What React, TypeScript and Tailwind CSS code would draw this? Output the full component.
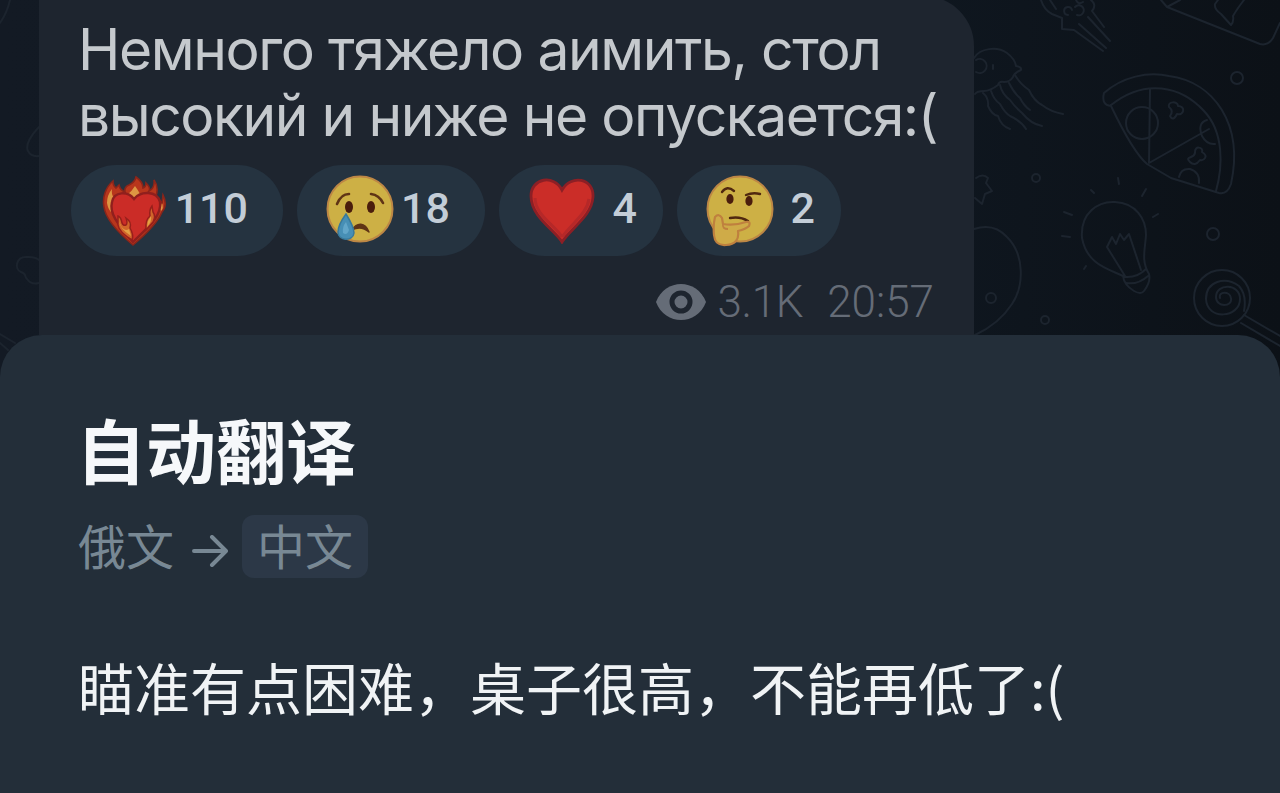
import React from 'react';

const Wallpaper: React.FC = () => (
  <svg className="absolute inset-0" width="1280" height="400" viewBox="0 0 1280 400" fill="none" stroke="#1c242e" strokeWidth="2" strokeLinecap="round" strokeLinejoin="round">
    {/* left edge */}
    <path d="M10 0Q7 13 0 23M39 127C31 135 25 145 28 151Q31 157 39 156" />
    <path d="M39 260C34 256 29 257 26 257C16 257 14 269 21 272C27 274 24 276 27 279Q31 285 39 283" />
    <path d="M0 334L15 343M0 343L8 350" />
    {/* squid */}
    <path d="M1041 0Q1044 10 1052 14L1062 18L1062 29L1074 30L1103 51M1079 24L1106 48M1088 17L1110 41M1091 0Q1097 5 1092 11L1104 27M1050 0L1056 9" />
    <path d="M1068 15A4 4 0 1 1 1072 10M1077 15A5 5 0 1 0 1075 7M1083 2Q1078 5 1076 0" />
    {/* pizza box */}
    <path d="M1161 0L1167 7L1260 44Q1268 46 1273 38L1280 23M1167 7L1180 0M1244 0Q1237 9 1233 16Q1234 22 1231 25L1221 14Q1214 9 1215 4L1218 0" />
    {/* jellyfish */}
    <path d="M974 58C980 48 997 46 1007 53Q1015 59 1016 66Q1022 67 1021 70Q1014 73 1013 77Q1010 82 1004 82Q999 81 998 85Q990 91 984 91Q977 91 975 94" />
    <path d="M976 60A7 7 0 1 1 976 72M993 65V69" />
    <path d="M983 93Q989 98 988 106Q992 115 998 116Q1001 126 1010 129M991 91Q994 100 1000 104Q1005 113 1010 116Q1021 121 1026 129M1000 85Q1002 94 1010 100Q1015 107 1022 113Q1031 124 1042 126M1009 83Q1014 93 1020 98Q1024 106 1030 110M1015 75Q1020 84 1029 90Q1034 101 1042 105Q1051 112 1063 114" />
    {/* pizza */}
    <path d="M1104 93C1122 77 1148 71 1169 76C1214 82 1244 124 1231 184Q1227 195 1219 193L1171 178L1147 164Q1133 152 1111 106Q1101 105 1104 93ZM1111 105C1145 78 1181 86 1204 111C1224 132 1223 166 1216 191" />
    <path d="M1150 89L1149 163L1209 129M1207 120Q1197 123 1202 136Q1207 145 1215 144M1179 177Q1181 168 1190 169Q1200 172 1199 183" />
    <circle cx="1142" cy="123" r="16" />
    <path d="M1169 107C1167 101 1178 101 1178 106C1186 106 1184 116 1177 114Q1173 122 1170 116Q1174 111 1169 107ZM1195 153C1194 145 1204 147 1202 152C1209 156 1204 161 1200 160Q1195 167 1190 162C1184 156 1194 159 1195 153Z" />
    {/* bulb */}
    <path d="M1123 276C1109 269 1087 265 1082 238C1080 213 1098 201 1115 202C1136 203 1146 219 1146 235C1145 250 1141 261 1149 274Q1151 282 1144 291Q1141 295 1134 291Q1124 285 1123 276ZM1125 276L1107 247L1112 237L1116 244L1120 234L1124 240L1129 234L1141 270M1125 277Q1137 278 1146 269M1126 283Q1138 285 1148 276" />
    <path d="M1118 178L1119 184M1146 189L1142 196M1091 190L1094 193M1064 212L1072 215M1062 236L1070 237M1153 217L1158 214M1084 269L1086 266" />
    {/* planet */}
    <path d="M974 229C989 224 999 228 1007 237C1025 255 1024 286 1012 304Q999 324 975 335" />
    <path d="M976 178Q983 173 988 178L986 183L992 191L985 194L982 204L975 198" />
    {/* lollipop */}
    <circle cx="1222" cy="298" r="28" />
    <path d="M1220 298C1218 291 1230 291 1231 298C1233 307 1216 308 1216 297C1216 283 1240 283 1240 299C1240 318 1207 321 1206 299C1206 281 1225 276 1239 286Q1247 295 1244 311M1244 315L1280 336M1241 323L1280 346" />
    {/* dots */}
    <circle cx="1237" cy="78" r="6" />
    <circle cx="1213" cy="234" r="6" />
    <circle cx="991" cy="298" r="5" />
    <circle cx="1045" cy="320" r="4" />
    <circle cx="1036" cy="178" r="4" />
  </svg>
);

const BurningHeart = () => (
  <svg width="66" height="74" viewBox="0 0 66 74">
    <path d="M32 71C20 61 5 47 3 33C1 23 5 13 12 7Q12 12 15 14L18 11Q19 16 24 18Q23 13 28 11Q34 8 35 3Q42 8 42 14Q45 13 45 9Q50 14 48 17Q54 14 53 6Q58 13 55 22Q60 27 61 30L62 21Q67 31 61 38C56 50 44 61 32 71Z" fill="#b8361c" stroke="#8a251a" strokeWidth="1.6" />
    <path d="M11 15Q6 21 6 29Q7 35 10 38Q10 29 13 24Q10 20 11 15ZM26 21Q31 17 34 12Q37 16 39 20L33 24ZM61 29Q63 34 60 37L59 35Z" fill="#dd9642" />
    <path d="M33 25C27 17 13 17 11 28C8 40 17 50 32 68C47 53 61 42 59 28C56 16 39 17 33 25Z" fill="#cb2c27" stroke="#901f1d" strokeWidth="2.4" />
    <path d="M17 42Q20 43 21 49Q22 52 25 51Q27 49 25 44Q31 48 29 54Q33 61 31 66Q18 58 17 51Z" fill="#d1652a" stroke="#981f1b" strokeWidth="1.5" />
    <path d="M51 32Q48 36 49 42Q44 46 45 56L52 48Q55 42 52 38Z" fill="#d1652a" stroke="#981f1b" strokeWidth="1.5" />
    <path d="M18 47Q19 55 30 62L28 55Q24 58 20 52ZM50 42Q51 48 46 53L47 47Z" fill="#e3a044" />
  </svg>
);

const CryingFace = () => (
  <svg width="68" height="68" viewBox="0 0 68 68" className="-mt-1">
    <circle cx="34" cy="34" r="32.5" fill="#cdb045" stroke="#bd8745" strokeWidth="2" />
    <ellipse cx="23" cy="32" rx="4" ry="6" fill="#4a1d0c" />
    <ellipse cx="45" cy="32" rx="4" ry="6" fill="#4a1d0c" />
    <path d="M11 29Q15 19 23 19M45 19Q53 20 57 28" fill="none" stroke="#603415" strokeWidth="2.6" strokeLinecap="round" />
    <path d="M26 55C31 47 39 47 43 57Q35 50 26 55Z" fill="#603415" stroke="#603415" strokeWidth="1.4" strokeLinejoin="round" />
    <path d="M20 39Q12 50 12 57C12 66 27 67 28 58Q28 52 20 39Z" fill="#478fb5" stroke="#39799a" strokeWidth="1.5" />
    <path d="M20 47Q16 52 17 58Q21 61 23 55Z" fill="#62a6c9" />
  </svg>
);

const RedHeart = () => (
  <svg width="66" height="66" viewBox="0 0 66 66">
    <path d="M33 64C26 52 2 39 2 18C2 0 25-4 33 12C42-4 65 0 64 19C63 38 41 51 33 64Z" fill="#cb2d28" stroke="#8d1f25" strokeWidth="2.8" />
    <path d="M33 59C26 47 6 37 6 20M60 21C58 36 43 45 33 59" fill="none" stroke="#b52828" strokeWidth="3" />
  </svg>
);

const ThinkingFace = () => (
  <svg width="68" height="72" viewBox="0 0 68 72">
    <circle cx="34" cy="34" r="32.5" fill="#cdb045" stroke="#bd8745" strokeWidth="2" />
    <ellipse cx="24" cy="24" rx="3.6" ry="5" fill="#4a1d0c" />
    <ellipse cx="43" cy="26" rx="3.6" ry="5" fill="#4a1d0c" />
    <path d="M16 17Q21 10 28 16M40 20Q47 17 54 19M24 43Q34 41 42 46" fill="none" stroke="#50280f" strokeWidth="2.4" strokeLinecap="round" />
    <path d="M9 42Q13 38 16 43L17 49Q28 51 40 47Q45 46 43 51Q40 54 32 56Q34 69 20 70Q9 71 8 60Q7 50 9 42Z" fill="#cfab48" stroke="#bf803e" strokeWidth="2.2" strokeLinejoin="round" />
    <path d="M17 49Q16 54 22 54" fill="none" stroke="#bf803e" strokeWidth="1.8" />
  </svg>
);

interface ReactionProps {
  count: number;
  className: string;
  children: React.ReactNode;
}

const Reaction: React.FC<ReactionProps> = ({ count, className, children }) => (
  <div className={`flex h-[91px] items-center justify-between rounded-full bg-[#253340] ${className}`}>
    {children}
    <span className="-mt-[4px] font-[Roboto,sans-serif] text-[43px] leading-none font-medium text-[#c3cdd7]">{count}</span>
  </div>
);

const App: React.FC = () => {
  return (
    <div className="relative flex h-[793px] w-[1280px] flex-col overflow-hidden bg-linear-to-r from-[#131a24] via-[#0f1720] via-70% to-[#0c1117]">
      <Wallpaper />

      <div className="relative z-10 -mt-1 ml-[39px] h-[339px] w-[935px] shrink-0 rounded-tr-[50px] bg-[#1e252f] pt-[21px] pl-8">
        <div className="ml-[7px] font-[Inter,sans-serif] text-[57px] leading-[66px] whitespace-nowrap text-[#c5c9cd]">
          <p className="tracking-[-1.42px]">Немного тяжело аимить, стол</p>
          <p className="tracking-[-1.46px]">высокий и ниже не опускается:(</p>
        </div>

        <div className="mt-4 flex gap-3.5">
          <Reaction count={110} className="w-[212px] pr-[35px] pl-[30px]"><BurningHeart /></Reaction>
          <Reaction count={18} className="w-[188px] pr-[35px] pl-[29px]"><CryingFace /></Reaction>
          <Reaction count={4} className="w-[164px] pr-[26px] pl-[30px]"><RedHeart /></Reaction>
          <Reaction count={2} className="w-[164px] pr-[26px] pl-[29px]"><ThinkingFace /></Reaction>
        </div>

        <div className="mt-[24px] mr-[40px] flex items-center justify-end font-[Roboto,sans-serif] text-[44px] leading-[44px] font-light text-[#656c77]">
          <svg width="50" height="36" viewBox="0 0 50 36" className="mr-3">
            <path d="M0 18C9-6 41-6 50 18C41 42 9 42 0 18Z" fill="#656c77" />
            <circle cx="25" cy="18" r="9" fill="#656c77" stroke="#1e252f" strokeWidth="5" />
          </svg>
          <span className="tracking-[-0.4px]">3.1K</span>
          <span className="ml-6">20:57</span>
        </div>
      </div>

      <div className="relative z-20 flex-1 rounded-t-[42px] bg-[#232e39] px-[79px] pt-[76px] font-['Noto_Sans_CJK_SC',sans-serif]">
        <h1 className="-ml-[3px] text-[70px] leading-[76px] font-bold text-[#f6f8fa]">自动翻译</h1>
        <div className="mt-7 flex h-[63px] items-center text-[48px] leading-[58px] text-[#788894]">
          <span className="-mt-[5px] -ml-px">俄文</span>
          <svg width="36" height="32" viewBox="0 0 36 32" fill="none" stroke="#788894" strokeWidth="4" strokeLinecap="round" strokeLinejoin="round" className="mt-2 ml-[18px]">
            <path d="M2 16H33M20 2L34 16L20 30" />
          </svg>
          <span className="ml-[14px] h-[63px] rounded-xl bg-[#2c3847] px-[15px]">中文</span>
        </div>
        <p className="mt-[68px] -ml-px text-[56px] leading-[80px] whitespace-nowrap text-[#f0f3f5]">瞄准有点困难，桌子很高，不能再低了:(</p>
      </div>
    </div>
  );
};

export default App;
